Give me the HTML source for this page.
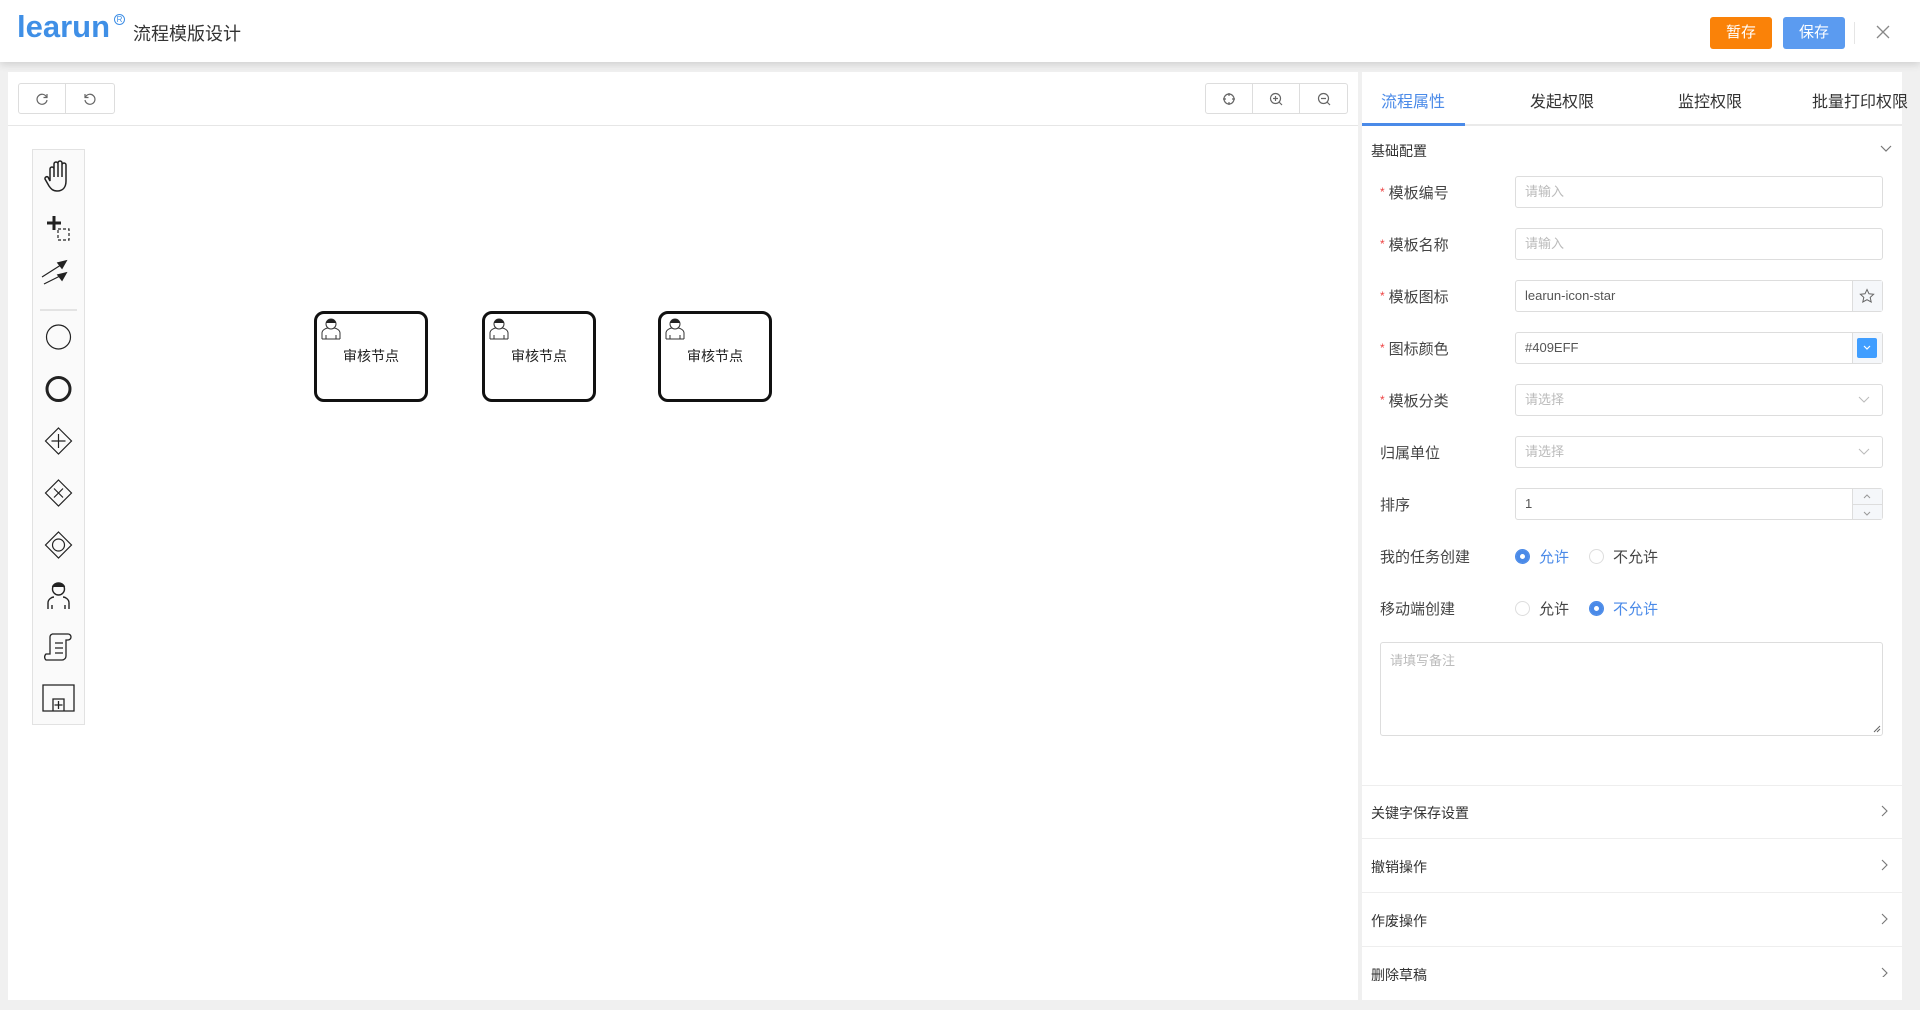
<!DOCTYPE html>
<html><head><meta charset="utf-8"><style>
*{box-sizing:border-box;margin:0;padding:0}
body{width:1920px;height:1010px;background:#f0f0f0;font-family:"Liberation Sans","Noto Sans CJK SC",sans-serif;color:#333;position:relative;overflow:hidden}
.abs{position:absolute}
.hdr{left:0;top:0;width:1920px;height:62px;background:#fff;box-shadow:0 2px 8px rgba(0,0,0,.15);z-index:2}
.logo{left:17px;top:9px;font-size:31px;font-weight:bold;color:#3f8fe6;letter-spacing:0px}
.reg{left:114px;top:14px;color:#3f8fe6;border:1px solid #3f8fe6;border-radius:50%;width:11px;height:11px;line-height:9px;text-align:center;font-size:8px}
.title{left:133px;top:20px;font-size:18px;color:#333}
.btn{top:17px;height:32px;width:62px;border-radius:3px;color:#fff;font-size:15px;text-align:center;line-height:32px}
.canvas{left:8px;top:72px;width:1350px;height:928px;background:#fff}
.tbtn{top:83px;height:31px;border:1px solid #ddd;border-radius:3px;background:#fff;display:flex}
.tbtn div{width:47px;border-right:1px solid #ddd;display:flex;align-items:center;justify-content:center}
.tbtn div:last-child{border-right:none}
.pal{left:32px;top:149px;width:53px;height:576px;background:#fafafa;border:1px solid #e2e2e2}
.node{top:311px;width:114px;height:91px;border:3px solid #111;border-radius:10px;background:#fff;font-size:14px;color:#222;text-align:center;line-height:84px}
.node svg{position:absolute;left:3px;top:2px}
.panel{left:1362px;top:72px;width:540px;height:928px;background:#fff}
.tab{top:88px;font-size:16px;color:#333}
.lbl{left:1380px;font-size:15px;color:#444}
.lbl b{color:#e44;font-weight:normal;font-size:12px;margin-right:4px;vertical-align:2px}
.inp{left:1515px;width:368px;height:32px;border:1px solid #ddd;border-radius:3px;background:#fff;font-size:13px;line-height:30px;padding-left:9px;color:#555}
.ph{color:#bbb}
.sec{left:1371px;font-size:14px;color:#333}
.chev{left:1880px}
.line{left:1362px;width:540px;height:1px;background:#eee}
.radio{width:15px;height:15px;border-radius:50%;border:1px solid #ddd;display:inline-block}
.radio.on{background:#4a8ae8;border-color:#4a8ae8;box-shadow:inset 0 0 0 4px #4a8ae8,inset 0 0 0 8px #fff}
</style></head><body>
<div class="abs hdr">
 <div class="abs logo">learun</div>
 <div class="abs reg">R</div>
 <div class="abs title">流程模版设计</div>
 <div class="abs btn" style="left:1710px;background:#fa8208">暂存</div>
 <div class="abs btn" style="left:1783px;background:#5b9bf0">保存</div>
 <div class="abs" style="left:1854px;top:22px;width:1px;height:22px;background:#e5e5e5"></div>
 <svg class="abs" style="left:1876px;top:25px" width="14" height="14"><path d="M1 1L13 13M13 1L1 13" stroke="#888" stroke-width="1.3"/></svg>
</div>
<div class="abs canvas"></div>
<div class="abs" style="left:8px;top:125px;width:1350px;height:1px;background:#e6e6e6"></div>
<div class="abs tbtn" style="left:18px;width:97px">
 <div><svg width="14" height="14" viewBox="0 0 14 14"><path d="M11.5 5A5 5 0 1 0 12 8" fill="none" stroke="#666" stroke-width="1.2"/><path d="M12 2v3.5H8.5" fill="none" stroke="#666" stroke-width="1.2"/></svg></div>
 <div><svg width="14" height="14" viewBox="0 0 14 14"><path d="M2.5 5A5 5 0 1 1 2 8" fill="none" stroke="#666" stroke-width="1.2"/><path d="M2 2v3.5h3.5" fill="none" stroke="#666" stroke-width="1.2"/></svg></div>
</div>
<div class="abs tbtn" style="left:1205px;width:143px">
 <div><svg width="14" height="14"><circle cx="7" cy="7" r="5" fill="none" stroke="#666" stroke-width="1.2"/><path d="M7 1v3M7 10v3M1 7h3M10 7h3" stroke="#666" stroke-width="1.2"/></svg></div>
 <div><svg width="14" height="14"><circle cx="6.5" cy="6.5" r="5" fill="none" stroke="#666" stroke-width="1.2"/><path d="M4 6.5h5M6.5 4v5M10 10l3 3" stroke="#666" stroke-width="1.2"/></svg></div>
 <div><svg width="14" height="14"><circle cx="6.5" cy="6.5" r="5" fill="none" stroke="#666" stroke-width="1.2"/><path d="M4 6.5h5M10 10l3 3" stroke="#666" stroke-width="1.2"/></svg></div>
</div>
<div class="abs pal"></div>
<svg class="abs" style="left:32px;top:149px" width="53" height="576" viewBox="0 0 53 576">
 <g fill="none" stroke="#222" stroke-width="1.5">
 <path d="M18 32v-12a2 2 0 0 1 4 0v8v-13a2 2 0 0 1 4 0v13v-14a2 2 0 0 1 4 0v14v-12a2 2 0 0 1 4 0v16c0 6-3 10-9 10c-4 0-6-2-8-5l-4-7a2 2 0 0 1 3-2z"/>
 <path d="M15 74h14M22 67v14" stroke-width="3"/>
 <path d="M26 80h11v11H26z" stroke-dasharray="3 2" stroke-width="1.2"/>
 <path d="M10 128l22-14M12 135l20-10" stroke-width="1.2"/>
 <path d="M34 112l-8 2 4 5zM34 124l-8 2 4 5z" fill="#222"/>
 <path d="M8 161h37" stroke="#ccc" stroke-width="1"/>
 <circle cx="26.5" cy="188" r="12" stroke-width="1.2"/>
 <circle cx="26.5" cy="240" r="11.5" stroke-width="3"/>
 <path d="M26.5 279l13 13-13 13-13-13z M26.5 285v14M19.5 292h14" stroke-width="1.2"/>
 <path d="M26.5 331l13 13-13 13-13-13z M22 339.5l9 9M31 339.5l-9 9" stroke-width="1.2"/>
 <path d="M26.5 383l13 13-13 13-13-13z" stroke-width="1.2"/><circle cx="26.5" cy="396" r="6" stroke-width="1.2"/>
 <circle cx="26.5" cy="440" r="6" stroke-width="1.4"/><path d="M20.5 438c2-5 10-5 12 0" fill="#222"/><path d="M16 460v-6c0-4 4-6 6-6M37 460v-6c0-4-4-6-6-6M20 460v-4M33 460v-4" stroke-width="1.4"/>
 <path d="M20 485h16a3 3 0 0 1 0 6h-2v16a4 4 0 0 1-4 4H14a4 4 0 0 1 0-6h4V488a3 3 0 0 1 3-3zM23 494h8M23 499h8M23 504h8" stroke-width="1.3"/>
 <path d="M11 536h31v26H11zM21 550h11v12H21zM26.5 552v8M22.5 556h8" stroke-width="1.3"/>
 </g>
</svg>
<div class="abs node" style="left:314px">审核节点<svg width="22" height="24" viewBox="0 0 22 24"><circle cx="11" cy="8" r="5" fill="#fff" stroke="#333"/><path d="M6 7c1-5 9-5 10 0" fill="#222"/><path d="M2 23v-6c0-3 4-5 6-5M20 23v-6c0-3-4-5-6-5M2 23h18M6 23v-4M16 23v-4" fill="none" stroke="#333"/></svg></div>
<div class="abs node" style="left:482px">审核节点<svg width="22" height="24" viewBox="0 0 22 24"><circle cx="11" cy="8" r="5" fill="#fff" stroke="#333"/><path d="M6 7c1-5 9-5 10 0" fill="#222"/><path d="M2 23v-6c0-3 4-5 6-5M20 23v-6c0-3-4-5-6-5M2 23h18M6 23v-4M16 23v-4" fill="none" stroke="#333"/></svg></div>
<div class="abs node" style="left:658px">审核节点<svg width="22" height="24" viewBox="0 0 22 24"><circle cx="11" cy="8" r="5" fill="#fff" stroke="#333"/><path d="M6 7c1-5 9-5 10 0" fill="#222"/><path d="M2 23v-6c0-3 4-5 6-5M20 23v-6c0-3-4-5-6-5M2 23h18M6 23v-4M16 23v-4" fill="none" stroke="#333"/></svg></div>

<div class="abs panel"></div>
<div class="abs line" style="top:124px;height:2px;background:#eaeaea"></div>
<div class="abs" style="left:1362px;top:123px;width:103px;height:3px;background:#4a8ae8"></div>
<div class="abs tab" style="left:1381px;color:#4a8ae8">流程属性</div>
<div class="abs tab" style="left:1530px">发起权限</div>
<div class="abs tab" style="left:1678px">监控权限</div>
<div class="abs tab" style="left:1812px">批量打印权限</div>
<div class="abs sec" style="top:141px">基础配置</div>
<svg class="abs chev" style="top:144px" width="12" height="10"><path d="M1 2l5 5 5-5" fill="none" stroke="#777" stroke-width="1.2"/></svg>

<div class="abs lbl" style="top:182px"><b>*</b>模板编号</div>
<div class="abs inp ph" style="top:176px">请输入</div>
<div class="abs lbl" style="top:234px"><b>*</b>模板名称</div>
<div class="abs inp ph" style="top:228px">请输入</div>
<div class="abs lbl" style="top:286px"><b>*</b>模板图标</div>
<div class="abs inp" style="top:280px">learun-icon-star</div>
<div class="abs" style="left:1852px;top:281px;width:30px;height:30px;background:#f5f7fa;border-left:1px solid #ddd"></div>
<svg class="abs" style="left:1859px;top:288px" width="16" height="16" viewBox="0 0 16 16"><path d="M8 1.5l2 4.3 4.6.5-3.4 3.1 1 4.6L8 11.7 3.8 14l1-4.6L1.4 6.3 6 5.8z" fill="none" stroke="#666" stroke-width="1"/></svg>
<div class="abs lbl" style="top:338px"><b>*</b>图标颜色</div>
<div class="abs inp" style="top:332px">#409EFF</div>
<div class="abs" style="left:1852px;top:333px;width:30px;height:30px;background:#f5f7fa;border-left:1px solid #ddd"></div>
<div class="abs" style="left:1857px;top:338px;width:20px;height:20px;background:#409eff;border-radius:2px"></div>
<svg class="abs" style="left:1863px;top:345px" width="8" height="6"><path d="M1 1l3 3 3-3" fill="none" stroke="#fff" stroke-width="1.2"/></svg>
<div class="abs lbl" style="top:390px"><b>*</b>模板分类</div>
<div class="abs inp ph" style="top:384px">请选择</div>
<svg class="abs" style="left:1858px;top:396px" width="12" height="8"><path d="M1 1l5 5 5-5" fill="none" stroke="#bbb" stroke-width="1"/></svg>
<div class="abs lbl" style="top:442px;left:1380px">归属单位</div>
<div class="abs inp ph" style="top:436px">请选择</div>
<svg class="abs" style="left:1858px;top:448px" width="12" height="8"><path d="M1 1l5 5 5-5" fill="none" stroke="#bbb" stroke-width="1"/></svg>
<div class="abs lbl" style="top:494px">排序</div>
<div class="abs inp" style="top:488px">1</div>
<div class="abs" style="left:1852px;top:489px;width:30px;height:30px;background:#f5f7fa;border-left:1px solid #ddd"></div>
<div class="abs" style="left:1852px;top:504px;width:30px;height:1px;background:#ddd"></div>
<svg class="abs" style="left:1862px;top:493px" width="10" height="24"><path d="M2 5l3-3 3 3M2 19l3 3 3-3" fill="none" stroke="#999" stroke-width="1"/></svg>

<div class="abs lbl" style="top:546px">我的任务创建</div>
<div class="abs" style="left:1515px;top:546px;font-size:15px;display:flex;align-items:center"><span class="radio on"></span><span style="color:#4a8ae8;margin:0 20px 0 9px">允许</span><span class="radio"></span><span style="margin-left:9px;color:#444">不允许</span></div>
<div class="abs lbl" style="top:598px">移动端创建</div>
<div class="abs" style="left:1515px;top:598px;font-size:15px;display:flex;align-items:center"><span class="radio"></span><span style="color:#444;margin:0 20px 0 9px">允许</span><span class="radio on"></span><span style="margin-left:9px;color:#4a8ae8">不允许</span></div>
<div class="abs" style="left:1380px;top:642px;width:503px;height:94px;border:1px solid #ddd;border-radius:3px;font-size:13px;color:#bbb;padding:7px 9px">请填写备注</div>
<svg class="abs" style="left:1873px;top:725px" width="8" height="8"><path d="M1 7L7 1M4 7L7 4" stroke="#666"/></svg>

<div class="abs line" style="top:785px"></div>
<div class="abs sec" style="top:803px">关键字保存设置</div>
<div class="abs line" style="top:838px"></div>
<div class="abs sec" style="top:857px">撤销操作</div>
<div class="abs line" style="top:892px"></div>
<div class="abs sec" style="top:911px">作废操作</div>
<div class="abs line" style="top:946px"></div>
<div class="abs sec" style="top:965px">删除草稿</div>
<svg class="abs" style="left:1881px;top:805px" width="8" height="172"><path d="M1 1l5 5-5 5M1 55l5 5-5 5M1 109l5 5-5 5M1 163l5 5-5 5" fill="none" stroke="#777" stroke-width="1.1"/></svg>
</body></html>
